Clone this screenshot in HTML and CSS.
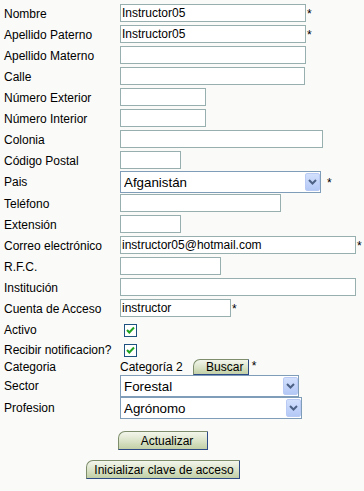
FILE: index.html
```html
<!DOCTYPE html>
<html lang="es">
<head>
    <meta charset="UTF-8">
    <title>Datos del instructor</title>
    <link rel="stylesheet" href="styles.css">
</head>
<body>
    <form class="perfil">
        <div class="fila">
            <label class="etq">Nombre</label>
            <input class="txt w186" type="text" value="Instructor05"><span class="req">*</span>
        </div>
        <div class="fila">
            <label class="etq">Apellido Paterno</label>
            <input class="txt w186" type="text" value="Instructor05"><span class="req">*</span>
        </div>
        <div class="fila">
            <label class="etq">Apellido Materno</label>
            <input class="txt w186" type="text">
        </div>
        <div class="fila">
            <label class="etq">Calle</label>
            <input class="txt w185" type="text">
        </div>
        <div class="fila">
            <label class="etq">Número Exterior</label>
            <input class="txt w86" type="text">
        </div>
        <div class="fila">
            <label class="etq">Número Interior</label>
            <input class="txt w86" type="text">
        </div>
        <div class="fila">
            <label class="etq">Colonia</label>
            <input class="txt w203" type="text">
        </div>
        <div class="fila">
            <label class="etq">Código Postal</label>
            <input class="txt w61" type="text">
        </div>
        <div class="fila fila-sel">
            <label class="etq">Pais</label>
            <span class="combo w201">
                <select><option>Afganistán</option></select>
                <span class="flecha"><svg width="9" height="6" viewBox="0 0 9 6"><path d="M1 1 L4.5 4.5 L8 1" fill="none" stroke="#4d6185" stroke-width="2"/></svg></span>
            </span><span class="req req-sel">*</span>
        </div>
        <div class="fila">
            <label class="etq">Teléfono</label>
            <input class="txt w161" type="text">
        </div>
        <div class="fila">
            <label class="etq">Extensión</label>
            <input class="txt w61" type="text">
        </div>
        <div class="fila">
            <label class="etq">Correo electrónico</label>
            <input class="txt w236" type="text" value="instructor05@hotmail.com"><span class="req">*</span>
        </div>
        <div class="fila">
            <label class="etq">R.F.C.</label>
            <input class="txt w101" type="text">
        </div>
        <div class="fila">
            <label class="etq">Institución</label>
            <input class="txt w236" type="text">
        </div>
        <div class="fila">
            <label class="etq">Cuenta de Acceso</label>
            <input class="txt w111" type="text" value="instructor"><span class="req">*</span>
        </div>
        <div class="fila">
            <label class="etq">Activo</label>
            <span class="chk"><svg width="11" height="11" viewBox="0 0 11 11"><path d="M2 5 L4.3 7.5 L9 2.5" fill="none" stroke="#21a121" stroke-width="2"/></svg></span>
        </div>
        <div class="fila fila-19">
            <label class="etq">Recibir notificacion?</label>
            <span class="chk"><svg width="11" height="11" viewBox="0 0 11 11"><path d="M2 5 L4.3 7.5 L9 2.5" fill="none" stroke="#21a121" stroke-width="2"/></svg></span>
        </div>
        <div class="fila fila-cat">
            <label class="etq">Categoria</label>
            <span class="valor">Categoría 2</span>
            <button type="button" class="btn btn-buscar">Buscar</button><span class="req">*</span>
        </div>
        <div class="fila fila-sel">
            <label class="etq">Sector</label>
            <span class="combo w179">
                <select><option>Forestal</option></select>
                <span class="flecha"><svg width="9" height="6" viewBox="0 0 9 6"><path d="M1 1 L4.5 4.5 L8 1" fill="none" stroke="#4d6185" stroke-width="2"/></svg></span>
            </span>
        </div>
        <div class="fila fila-sel">
            <label class="etq">Profesion</label>
            <span class="combo w182">
                <select><option>Agrónomo</option></select>
                <span class="flecha"><svg width="9" height="6" viewBox="0 0 9 6"><path d="M1 1 L4.5 4.5 L8 1" fill="none" stroke="#4d6185" stroke-width="2"/></svg></span>
            </span>
        </div>

        <div class="acciones">
            <button type="button" class="btn btn-actualizar">Actualizar</button>
            <button type="button" class="btn btn-clave">Inicializar clave de acceso</button>
        </div>
    </form>
</body>
</html>
```

FILE: styles.css
```css
/* General */
body {
    margin: 0;
    background: #fafaf8;
    color: #000;
    font-family: "Liberation Sans", Arial, sans-serif;
    font-size: 12px;
}

.perfil {
    padding: 3px 0 0 4px;
}

/* Filas del formulario */
.fila {
    display: flex;
    align-items: center;
    height: 21px;
}

.fila-sel {
    height: 22px;
}

.fila-19 {
    height: 19px;
}

.fila-cat {
    height: 16px;
}

.etq {
    width: 116px;
    flex-shrink: 0;
}

/* Cajas de texto */
.txt {
    box-sizing: border-box;
    height: 18px;
    margin: 0 0 1px;
    padding: 0 1px;
    border: 1px solid #97afaf;
    background: #fff;
    font-family: "Liberation Sans", Arial, sans-serif;
    font-size: 12px;
    color: #000;
    outline: none;
}

.w61 { width: 61px; }
.w86 { width: 86px; }
.w101 { width: 101px; }
.w111 { width: 111px; }
.w161 { width: 161px; }
.w179 { width: 179px; }
.w182 { width: 182px; }
.w185 { width: 185px; }
.w186 { width: 186px; }
.w201 { width: 201px; }
.w203 { width: 203px; }
.w236 { width: 236px; }

.req {
    align-self: flex-start;
    margin: 5px 0 0 1px;
    line-height: 12px;
}

.req-sel {
    margin: 6px 0 0 6px;
}

/* Combos */
.combo {
    position: relative;
    display: inline-block;
    height: 22px;
}

.combo select {
    box-sizing: border-box;
    width: 100%;
    height: 22px;
    margin: 0;
    padding: 0 0 0 3px;
    border: 1px solid #7f9db9;
    border-radius: 0;
    background: #fff;
    font-family: "Liberation Sans", Arial, sans-serif;
    font-size: 13.33px;
    color: #000;
    appearance: none;
    -webkit-appearance: none;
}

.flecha {
    position: absolute;
    top: 2px;
    right: 1px;
    box-sizing: border-box;
    width: 15px;
    height: 18px;
    border: 1px solid #b9cbf5;
    border-radius: 2px;
    background: linear-gradient(#d3e0fd, #b4c8f6);
    display: flex;
    align-items: center;
    justify-content: center;
    pointer-events: none;
}

/* Casillas */
.chk {
    box-sizing: border-box;
    width: 13px;
    height: 13px;
    margin: 2px 0 0 4px;
    border: 1px solid #1c5180;
    background: #fff;
    display: flex;
    align-items: center;
    justify-content: center;
}

.valor {
    margin-left: 0;
}

/* Botones */
.btn {
    box-sizing: border-box;
    height: 19px;
    margin: 0;
    padding: 0 2px 0 10px;
    border: 1px solid;
    border-color: #7e8e6c #2c4a86 #2c4a86 #7e8e6c;
    border-top-left-radius: 7px;
    background: linear-gradient(#f3f6ec, #d9e2c6 55%, #c2cfa6);
    font-family: "Liberation Sans", Arial, sans-serif;
    font-size: 12px;
    color: #000;
    text-align: center;
    cursor: pointer;
}

.btn-buscar {
    width: 56px;
    height: 16px;
    margin-left: 10px;
    line-height: 12px;
    padding-top: 0;
}

.fila-cat .req {
    margin: 1px 0 0 3px;
}

.acciones {
    width: 318px;
    margin-top: 12px;
    display: flex;
    flex-direction: column;
    align-items: center;
    gap: 10px;
}

.btn-actualizar {
    width: 90px;
}

.btn-clave {
    width: 154px;
    padding: 0 2px 0 4px;
}
```
